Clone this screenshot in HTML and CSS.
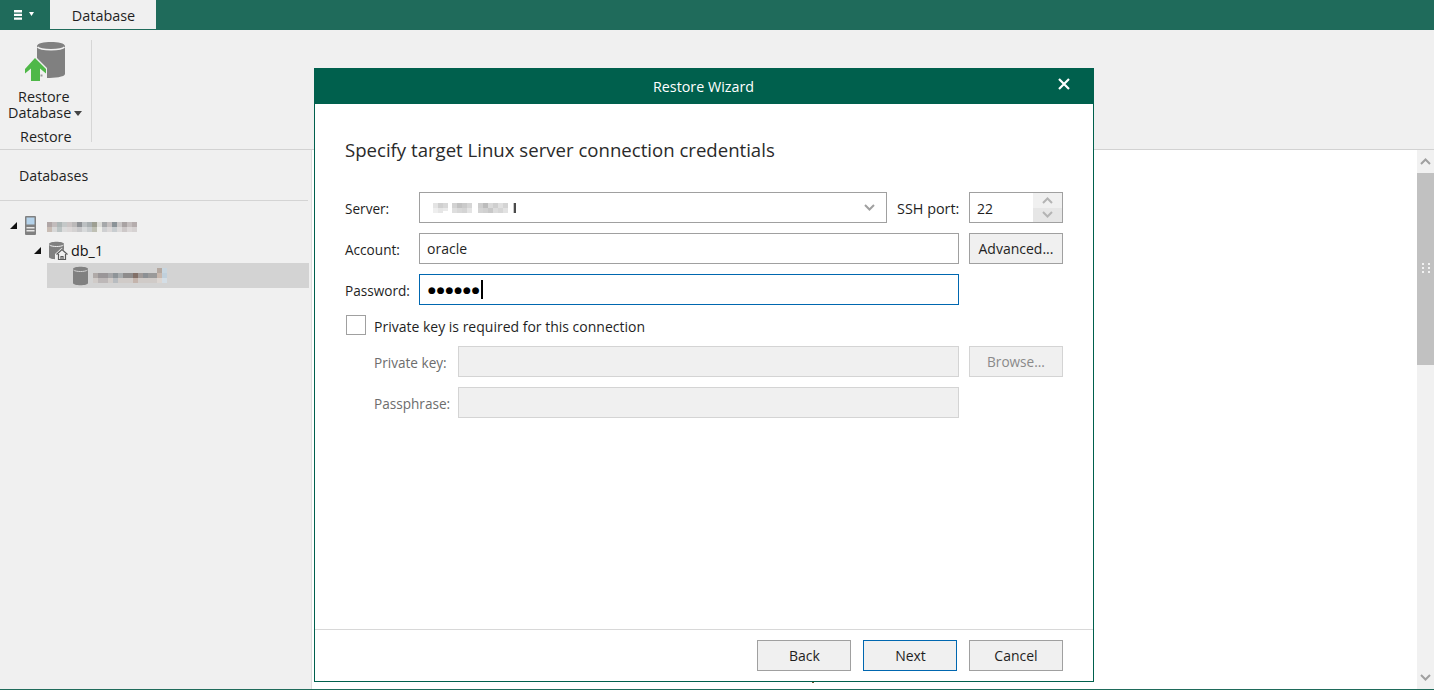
FILE: index.html
```html
<!DOCTYPE html>
<html lang="en">
<head>
<meta charset="utf-8">
<title>Restore Wizard</title>
<link rel="stylesheet" href="styles.css">
</head>
<body>
<div class="app">
  <header class="topbar">
    <div class="menu-btn">
      <svg class="menu-icon" width="8" height="10" viewBox="0 0 8 10"><path d="M0 0h8v2.400H0zM0 3.700h8v2.400H0zM0 7.400h8v2.400H0z" fill="#fff"/></svg>
      <svg width="5" height="4" viewBox="0 0 5 4"><path d="M0 0h5L2.500 4z" fill="#fff"/></svg>
    </div>
    <div class="tab">Database</div>
  </header>
  <section class="ribbon">
    <div class="ribbon-group">
      <svg class="restore-icon" width="42" height="42" viewBox="0 0 42 42">
        <path d="M13 6C13 .5 41 .5 41 6V34C41 37 30 38 23 38V28L13 18z" fill="#808080"/>
        <path d="M13.500 7c3 3.500 24 3.500 27 0" fill="none" stroke="#f0f0f0" stroke-width="1.500"/>
        <path d="M11 18L22 29V33.500L16 28.500V41H7V28.500L1 33.500V29z" fill="#4fb848"/>
        <rect x="16.500" y="34.500" width="2" height="2" fill="#9a9a9a"/>
      </svg>
      <div class="ribbon-label">Restore</div>
      <div class="ribbon-label label-db">Database<span class="caret"></span></div>
      <div class="group-title">Restore</div>
    </div>
    <div class="ribbon-sep"></div>
  </section>
  <main class="workspace">
    <aside class="sidebar">
      <h2 class="side-title">Databases</h2>
      <ul class="tree">
        <li class="node node-server">
          <span class="twisty"></span>
          <svg class="server-icon" width="11" height="19" viewBox="0 0 11 19"><rect width="11" height="19" rx="1" fill="#808080"/><rect x="1.500" y="1.500" width="8" height="7" fill="#b4d2ea"/><rect x="1.500" y="11" width="8" height="1.500" fill="#e6e6e6"/><rect x="1.500" y="14" width="8" height="1.500" fill="#e6e6e6"/></svg>
          <svg class="mosaic-server" width="90" height="10" viewBox="0 0 18 2" shape-rendering="crispEdges"><rect x="0" y="0" width="1" height="1" fill="#b0a6a6"/><rect x="1" y="0" width="1" height="1" fill="#c2bcbc"/><rect x="2" y="0" width="1" height="1" fill="#aeb6b6"/><rect x="3" y="0" width="1" height="1" fill="#c4c8c8"/><rect x="4" y="0" width="1" height="1" fill="#cbc5c5"/><rect x="5" y="0" width="1" height="1" fill="#bbb9b9"/><rect x="6" y="0" width="1" height="1" fill="#8f9296"/><rect x="7" y="0" width="1" height="1" fill="#bcc0c2"/><rect x="8" y="0" width="1" height="1" fill="#a9afb1"/><rect x="9" y="0" width="1" height="1" fill="#9e9f92"/><rect x="10" y="0" width="1" height="1" fill="#dcdcd8"/><rect x="11" y="0" width="1" height="1" fill="#a6a8aa"/><rect x="12" y="0" width="1" height="1" fill="#c5c0c0"/><rect x="13" y="0" width="1" height="1" fill="#8b9398"/><rect x="14" y="0" width="1" height="1" fill="#c9c6c6"/><rect x="15" y="0" width="1" height="1" fill="#a9a3a3"/><rect x="16" y="0" width="1" height="1" fill="#c4bebe"/><rect x="17" y="0" width="1" height="1" fill="#b5adad"/><rect x="0" y="1" width="1" height="1" fill="#c8bcb4"/><rect x="1" y="1" width="1" height="1" fill="#d8d8d8"/><rect x="2" y="1" width="1" height="1" fill="#bcc4c4"/><rect x="3" y="1" width="1" height="1" fill="#dcdcdc"/><rect x="4" y="1" width="1" height="1" fill="#dcd8d8"/><rect x="5" y="1" width="1" height="1" fill="#d4d2d2"/><rect x="6" y="1" width="1" height="1" fill="#c8c8ca"/><rect x="7" y="1" width="1" height="1" fill="#d8dadb"/><rect x="8" y="1" width="1" height="1" fill="#c8ccce"/><rect x="9" y="1" width="1" height="1" fill="#bfc0b4"/><rect x="10" y="1" width="1" height="1" fill="#eeeeea"/><rect x="11" y="1" width="1" height="1" fill="#cfd0d2"/><rect x="12" y="1" width="1" height="1" fill="#dcd9d9"/><rect x="13" y="1" width="1" height="1" fill="#c8cdd0"/><rect x="14" y="1" width="1" height="1" fill="#dddbdb"/><rect x="15" y="1" width="1" height="1" fill="#cdc8c8"/><rect x="16" y="1" width="1" height="1" fill="#dcd8d8"/><rect x="17" y="1" width="1" height="1" fill="#d6d2d2"/></svg>
        </li>
        <li class="node node-db">
          <span class="twisty"></span>
          <svg class="db-icon" width="20" height="20" viewBox="0 0 20 20"><path d="M0 3C0 0 15 0 15 3V16C15 19 0 19 0 16z" fill="#808080"/><path d="M.5 4c2 2 12 2 14 0" fill="none" stroke="#f0f0f0"/><path d="M6 20v-7l6.500-6 7 6.500V20z" fill="#f0f0f0"/><path d="M7.500 13.500L13 8.500l5.500 5M9.500 13v5.500h7V13M12 18.500v-3h2v3" fill="none" stroke="#5a5a5a" stroke-width="1.200"/></svg>
          <span class="db-name">db_1</span>
        </li>
        <li class="node node-inst">
          <svg width="15" height="20" viewBox="0 0 15 20"><path d="M0 3C0 0 15 0 15 3V17C15 20 0 20 0 17z" fill="#808080"/><path d="M.5 4c2 2 12 2 14 0" fill="none" stroke="#d3d3d3"/></svg>
          <svg class="mosaic-inst" width="74" height="15" viewBox="0 0 74 15" shape-rendering="crispEdges"><rect x="0" y="5" width="64" height="5" fill="#b0aaa8"/><rect x="0" y="10" width="64" height="5" fill="#d0cbc8"/><rect x="5" y="5" width="10" height="5" fill="#9a9698"/><rect x="15" y="5" width="5" height="5" fill="#a6a6a8"/><rect x="20" y="5" width="5" height="5" fill="#8e9498"/><rect x="25" y="5" width="5" height="5" fill="#a8acae"/><rect x="30" y="5" width="10" height="5" fill="#8e8c8c"/><rect x="40" y="5" width="5" height="5" fill="#827068"/><rect x="45" y="5" width="5" height="5" fill="#a09a98"/><rect x="50" y="5" width="5" height="5" fill="#8c9094"/><rect x="55" y="5" width="9" height="5" fill="#9a9a9a"/><rect x="5" y="10" width="10" height="5" fill="#bdb8b8"/><rect x="20" y="10" width="5" height="5" fill="#b8bcc0"/><rect x="40" y="10" width="5" height="5" fill="#c4b4ac"/><rect x="64" y="0" width="5" height="5" fill="#b4a8a0"/><rect x="69" y="0" width="5" height="5" fill="#c8d6e0"/><rect x="64" y="5" width="5" height="5" fill="#c8b8ae"/><rect x="69" y="5" width="5" height="5" fill="#c0d0dc"/><rect x="64" y="10" width="5" height="5" fill="#dcd6d2"/><rect x="69" y="10" width="5" height="5" fill="#d4dee6"/></svg>
        </li>
      </ul>
    </aside>
    <div class="content"></div>
    <div class="scrollbar">
      <svg class="scroll-arrow" width="11" height="7" viewBox="0 0 11 7"><path d="M1 6l4.500-4.500L10 6" fill="none" stroke="#a0a0a0" stroke-width="2"/></svg>
      <div class="scroll-track">
        <div class="scroll-thumb">
          <svg class="grip" width="8" height="10" viewBox="0 0 8 10" shape-rendering="crispEdges"><path d="M0 0h2v2H0zM6 0h2v2H6zM0 4h2v2H0zM6 4h2v2H6zM0 8h2v2H0zM6 8h2v2H6z" fill="#f2f2f2"/></svg>
        </div>
      </div>
      <svg class="scroll-arrow" width="11" height="7" viewBox="0 0 11 7"><path d="M1 1l4.500 4.500L10 1" fill="none" stroke="#a0a0a0" stroke-width="2"/></svg>
    </div>
  </main>
  <div class="statusline"></div>
</div>

<span class="speck"></span>
<div class="dialog">
  <div class="dialog-head">
    <span class="dialog-title">Restore Wizard</span>
    <svg class="dialog-close" width="12" height="12" viewBox="0 0 12 12"><path d="M1 1l10 10M11 1L1 11" stroke="#fff" stroke-width="2.200" fill="none"/></svg>
  </div>
  <div class="dialog-body">
    <h1 class="dialog-h">Specify target Linux server connection credentials</h1>
    <form class="form">
      <div class="row">
        <label class="lbl">Server:</label>
        <div class="field combo">
          <svg class="mosaic-ip" width="87" height="14" viewBox="0 0 87 14" shape-rendering="crispEdges"><rect x="4" y="2" width="5" height="5" fill="#e4e4e4"/><rect x="4" y="7" width="5" height="5" fill="#eeeeee"/><rect x="9" y="2" width="5" height="5" fill="#d0d0d0"/><rect x="9" y="7" width="5" height="5" fill="#e6e6e6"/><rect x="14" y="2" width="5" height="5" fill="#d8d8d8"/><rect x="14" y="7" width="5" height="3" fill="#eaeaea"/><rect x="23" y="2" width="5" height="5" fill="#d2d2d2"/><rect x="23" y="7" width="5" height="5" fill="#dedede"/><rect x="28" y="2" width="5" height="5" fill="#c2c2c2"/><rect x="28" y="7" width="5" height="5" fill="#d8d8d8"/><rect x="33" y="2" width="5" height="5" fill="#cacaca"/><rect x="33" y="7" width="5" height="5" fill="#d4d4d4"/><rect x="38" y="2" width="5" height="5" fill="#d6d6d6"/><rect x="38" y="7" width="5" height="5" fill="#e4e4e4"/><rect x="49" y="2" width="5" height="5" fill="#cecece"/><rect x="49" y="7" width="5" height="5" fill="#d4d4d4"/><rect x="54" y="2" width="5" height="5" fill="#bcbcbc"/><rect x="54" y="7" width="5" height="5" fill="#d0d0d0"/><rect x="59" y="2" width="5" height="5" fill="#dadada"/><rect x="59" y="7" width="5" height="5" fill="#c8c8c8"/><rect x="64" y="2" width="5" height="5" fill="#cfcfcf"/><rect x="64" y="7" width="5" height="5" fill="#dcdcdc"/><rect x="69" y="2" width="5" height="5" fill="#e0e0e0"/><rect x="69" y="7" width="5" height="5" fill="#d6d6d6"/><rect x="74" y="2" width="5" height="5" fill="#d4d4d4"/><rect x="74" y="7" width="5" height="5" fill="#e2e2e2"/><rect x="84" y="2" width="1" height="10" fill="#c8c8c8"/><rect x="85" y="2" width="2" height="10" fill="#4a4a4a"/></svg>
          <svg class="chev" width="11" height="7" viewBox="0 0 11 7"><path d="M1 1l4.500 4.500L10 1" fill="none" stroke="#a0a0a0" stroke-width="2"/></svg>
        </div>
        <label class="lbl-ssh">SSH port:</label>
        <div class="field spin">
          <span class="spin-val">22</span>
          <div class="spin-btns">
            <div class="spin-up"><svg width="11" height="7" viewBox="0 0 11 7"><path d="M1 6l4.500-4.500L10 6" fill="none" stroke="#b4b4b4" stroke-width="2"/></svg></div>
            <div class="spin-down"><svg width="11" height="7" viewBox="0 0 11 7"><path d="M1 1l4.500 4.500L10 1" fill="none" stroke="#b4b4b4" stroke-width="2"/></svg></div>
          </div>
        </div>
      </div>
      <div class="row">
        <label class="lbl">Account:</label>
        <div class="field wide">oracle</div>
        <button type="button" class="btn side-btn">Advanced...</button>
      </div>
      <div class="row">
        <label class="lbl">Password:</label>
        <div class="field wide focus"><span class="dots">●●●●●●</span><span class="cursor"></span></div>
      </div>
      <div class="check-row">
        <span class="checkbox"></span>
        <span class="check-text">Private key is required for this connection</span>
      </div>
      <div class="row sub">
        <label class="lbl-sub">Private key:</label>
        <div class="field sub-field"></div>
        <button type="button" class="btn side-btn disabled">Browse...</button>
      </div>
      <div class="row sub">
        <label class="lbl-sub">Passphrase:</label>
        <div class="field sub-field"></div>
      </div>
    </form>
  </div>
  <div class="dialog-foot">
    <button type="button" class="btn nudge">Back</button>
    <button type="button" class="btn nudge primary">Next</button>
    <button type="button" class="btn">Cancel</button>
  </div>
</div>
</body>
</html>
```

FILE: styles.css
```css
* { box-sizing: border-box; }
html, body { margin: 0; height: 100%; overflow: hidden; }
body {
  font-family: "Open Sans", "Noto Sans", sans-serif;
  font-size: 14px;
  color: #1f1f1f;
  background: #f0f0f0;
}
svg { display: block; flex: none; }
.app { display: flex; flex-direction: column; height: 690px; }

.topbar { height: 30px; flex: none; background: #1f6b5b; display: flex; align-items: flex-start; }
.menu-btn { width: 50px; height: 30px; display: flex; align-items: center; gap: 7px; padding-left: 14px; }
.menu-btn svg:last-child { margin-bottom: 3px; }
.tab { width: 106px; height: 29px; background: #f0f0f0; text-align: center; line-height: 31px; font-size: 14.4px; padding-left: 1px; }

.ribbon { height: 120px; flex: none; background: #f0f0f0; border-bottom: 1px solid #d2d2d2; display: flex; padding-top: 10px; }
.ribbon-group { width: 91px; display: flex; flex-direction: column; align-items: flex-start; line-height: 16px; font-size: 14.4px; }
.restore-icon { margin: 0 0 7px 24px; }
.ribbon-label { margin-left: 18px; }
.label-db { margin-left: 8px; display: flex; align-items: center; }
.caret { display: block; width: 0; height: 0; margin-left: 3px; margin-top: 1px; border-left: 4.500px solid transparent; border-right: 4.500px solid transparent; border-top: 5px solid #444; }
.group-title { margin: 8px 0 0 20px; }
.ribbon-sep { width: 1px; height: 102px; background: #d6d6d6; }

.workspace { flex: 1; display: flex; min-height: 0; }
.sidebar { width: 312px; flex: none; background: #f0f0f0; border-right: 1px solid #dcdcdc; }
.side-title { margin: 0 3px 0 0; height: 51px; border-bottom: 1px solid #d4d4d4; font-size: 14.2px; font-weight: 400; padding: 16px 0 0 19px; line-height: 19px; }
.tree { list-style: none; margin: 12px 0 0; padding: 0; }
.node { display: flex; align-items: center; height: 25px; }
.node-server { padding-left: 10px; }
.server-icon { margin-left: 8px; }
.mosaic-server { margin-left: 11px; margin-top: 3px; }
.node-db { padding-left: 34px; color: #111; }
.db-icon { margin-left: 8px; }
.db-name { margin-left: 2px; font-size: 14.4px; }
.node-inst { margin-left: 47px; margin-right: 2px; padding-left: 26px; background: #d3d3d3; }
.mosaic-inst { margin-left: 5px; }
.twisty { width: 0; height: 0; border-style: solid; border-width: 0 0 7px 7px; border-color: transparent transparent #111 transparent; }

.content { flex: 1; background: #fff; }
.scrollbar { width: 17px; flex: none; background: #f1f1f1; display: flex; flex-direction: column; align-items: center; }
.scroll-arrow { margin: 8px 0; }
.scroll-track { flex: 1; width: 100%; }
.scroll-thumb { width: 100%; height: 192px; background: #c1c1c1; display: flex; align-items: center; justify-content: center; }
.grip { margin-left: 1px; margin-top: -3px; }
.statusline { height: 1px; flex: none; background: #1f6b5b; }
.speck { position: absolute; left: 812px; top: 682px; width: 2px; height: 1px; background: #6a5428; }

.dialog { position: absolute; left: 314px; top: 68px; width: 780px; height: 614px; background: #fff; border: 1px solid #00604d; border-top: 0; display: flex; flex-direction: column; }
.dialog-head { flex: none; height: 36px; margin: 0 -1px; background: #00604d; color: #fff; display: flex; align-items: center; justify-content: center; position: relative; font-size: 14.3px; }
.dialog-title { margin-top: 1px; margin-right: 1px; }
.dialog-close { position: absolute; right: 24px; top: 10px; }
.dialog-body { flex: 1; padding: 33px 30px 0 30px; }
.dialog-h { margin: 0 0 29px; font-size: 18.6px; font-weight: 400; line-height: 26px; color: #2a2a2a; }
.form { display: flex; flex-direction: column; }
.row { display: flex; align-items: center; margin-bottom: 10px; height: 31px; }
.lbl { width: 74px; flex: none; font-size: 13.6px; padding-top: 2px; }
.field { height: 31px; border: 1px solid #a0a0a0; background: #fff; display: flex; align-items: center; padding-left: 7px; }
.combo { width: 468px; justify-content: space-between; padding-right: 11px; padding-left: 9px; }
.mosaic-ip { margin-left: 0; }
.lbl-ssh { margin-left: 10px; width: 72px; flex: none; font-size: 14.4px; padding-top: 2px; }
.spin { width: 94px; padding-right: 0; justify-content: space-between; }
.spin-val { padding-top: 2px; }
.spin-btns { width: 29px; height: 29px; display: flex; flex-direction: column; }
.spin-up, .spin-down { flex: 1; display: flex; align-items: center; justify-content: center; }
.spin-up { background: #f0f0f0; }
.spin-down { background: #e6e6e6; }
.wide { width: 540px; }
.side-btn { margin-left: 10px; }
.btn { width: 94px; height: 31px; border: 1px solid #a0a0a0; background: #f0f0f0; font: inherit; color: #1f1f1f; padding: 0; }
.nudge { padding-left: 1px; }
.focus { border-color: #0067b0; }
.dots { font-size: 9px; letter-spacing: 0.9px; color: #000; font-family: "DejaVu Sans", sans-serif; margin-left: 1px; }
.cursor { width: 2px; height: 19px; background: #000; margin-left: 0; }
.check-row { display: flex; align-items: center; gap: 8px; height: 20px; margin-bottom: 11px; margin-left: 1px; }
.check-text { padding-top: 2px; }
.checkbox { width: 20px; height: 20px; border: 1px solid #a0a0a0; background: #fff; }
.sub { color: #6d6d6d; }
.lbl-sub { width: 84px; margin-left: 29px; flex: none; font-size: 13.6px; padding-top: 2px; }
.sub-field { width: 501px; background: #f0f0f0; border-color: #d4d4d4; }
.disabled { color: #8a8a8a; border-color: #d4d4d4; font-size: 13.6px; }
.dialog-foot { flex: none; height: 52px; border-top: 1px solid #d8d8d8; display: flex; justify-content: flex-end; gap: 12px; padding: 10px 30px 0 0; }
.primary { border-color: #0067b0; }
```
